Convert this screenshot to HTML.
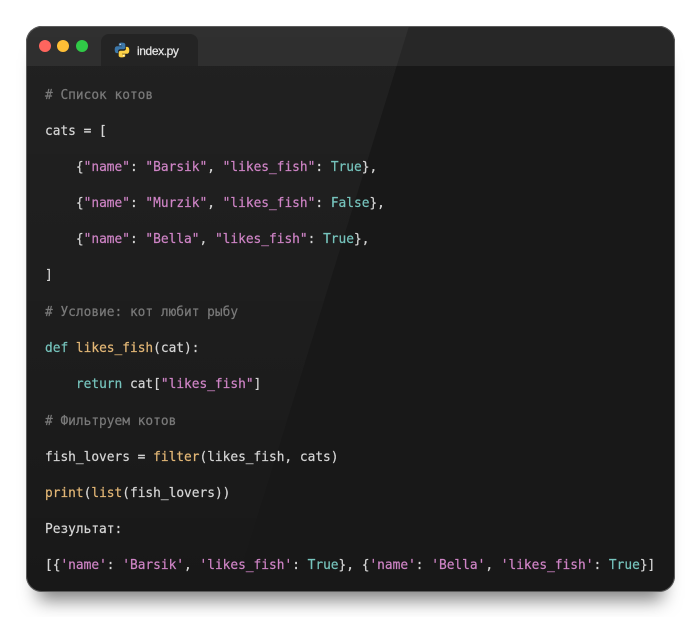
<!DOCTYPE html>
<html>
<head>
<meta charset="utf-8">
<style>
html,body{margin:0;padding:0;background:#fff;width:700px;height:617px;overflow:hidden}
.win{position:absolute;left:26px;top:26px;width:649px;height:566px;box-sizing:border-box;background:#181818;border-radius:16px;overflow:hidden;}
.shadow{position:absolute;left:26px;top:26px;width:649px;height:566px;border-radius:16px;box-shadow:0 20px 18px -12px rgba(0,0,0,.5)}
.bar{position:absolute;left:0;top:0;width:100%;height:40px;background:#272727}
.tab{position:absolute;left:75px;top:8px;width:97px;height:32px;background:#1b1b1b;border-radius:8px 8px 0 0}
.tabt{position:absolute;left:111px;top:18px;color:#e4e4e4;font:500 12px/14px "Liberation Sans",sans-serif;letter-spacing:-.4px;-webkit-text-stroke:.25px #e4e4e4}
.dot{position:absolute;top:14px;width:12px;height:12px;border-radius:50%}
.ov{position:absolute;left:0;top:0}
.edge{position:absolute;left:26px;top:26px;width:649px;height:566px;box-sizing:border-box;border:1.5px solid #5c5c5c;border-radius:16px;pointer-events:none}
.l{position:absolute;left:45px;white-space:pre;font-family:"DejaVu Sans Mono","Liberation Mono",monospace;font-size:12.83px;line-height:16px;color:#d6d6d6;-webkit-text-stroke:.2px currentColor}
.c{color:#7a7a7a}.s{color:#cf84c6}.k{color:#76c4bd}.f{color:#e3b776}
</style>
</head>
<body>
<div class="shadow"></div>
<div class="win">
<div class="bar"></div>
<div class="tab"></div>
<div class="dot" style="left:13px;background:#ff5f57"></div>
<div class="dot" style="left:31px;background:#febc2e"></div>
<div class="dot" style="left:50px;background:#28c840"></div>
<svg class="ov" width="649" height="566" viewBox="0 0 649 566">
<defs><linearGradient id="g" x1="0" y1="0" x2="0" y2="1"><stop offset="0" stop-color="#fff" stop-opacity=".04"/><stop offset=".6" stop-color="#fff" stop-opacity=".02"/><stop offset="1" stop-color="#fff" stop-opacity="0"/></linearGradient></defs>
<polygon points="0,0 383,0 208,566 0,566" fill="url(#g)"/>
</svg>
<svg style="position:absolute;left:88px;top:16px" width="16" height="16" viewBox="0 0 16 16">
<path d="M7.9 .6C4.6 .6 4.8 2 4.8 2v1.700h3.200v.5H3.100S.7 3.900 .7 7.600s2.100 3.500 2.100 3.500H4.100V9.400s-.1-2.100 2.100-2.100h3.100s2 0 2-1.900V2.500S11.600 .6 7.900 .6z" fill="#3c77a9"/>
<path d="M8.100 15.400c3.300 0 3.100-1.400 3.100-1.400v-1.700H8v-.5h4.900s2.400.3 2.400-3.400-2.100-3.500-2.100-3.500H11.900v1.700s.1 2.100-2.100 2.100H6.700s-2 0-2 1.900v2.900S4.400 15.400 8.100 15.400z" fill="#fdd247"/>
<circle cx="6.200" cy="2.400" r=".6" fill="#fff"/><circle cx="9.800" cy="13.600" r=".6" fill="#fff"/>
</svg>
<div class="tabt">index.py</div>
</div>
<div class="edge"></div>
<div class="l c" style="top:88px"># Список котов</div>
<div class="l" style="top:124px">cats = [</div>
<div class="l" style="top:160px">    {<span class="s">"name"</span>: <span class="s">"Barsik"</span>, <span class="s">"likes_fish"</span>: <span class="k">True</span>},</div>
<div class="l" style="top:196px">    {<span class="s">"name"</span>: <span class="s">"Murzik"</span>, <span class="s">"likes_fish"</span>: <span class="k">False</span>},</div>
<div class="l" style="top:232px">    {<span class="s">"name"</span>: <span class="s">"Bella"</span>, <span class="s">"likes_fish"</span>: <span class="k">True</span>},</div>
<div class="l" style="top:268px">]</div>
<div class="l c" style="top:305px"># Условие: кот любит рыбу</div>
<div class="l" style="top:341px"><span class="k">def</span> <span class="f">likes_fish</span>(cat):</div>
<div class="l" style="top:377px">    <span class="k">return</span> cat[<span class="s">"likes_fish"</span>]</div>
<div class="l c" style="top:414px"># Фильтруем котов</div>
<div class="l" style="top:450px">fish_lovers = <span class="f">filter</span>(likes_fish, cats)</div>
<div class="l" style="top:486px"><span class="f">print</span>(<span class="f">list</span>(fish_lovers))</div>
<div class="l" style="top:522px">Результат:</div>
<div class="l" style="top:558px">[{<span class="s">'name'</span>: <span class="s">'Barsik'</span>, <span class="s">'likes_fish'</span>: <span class="k">True</span>}, {<span class="s">'name'</span>: <span class="s">'Bella'</span>, <span class="s">'likes_fish'</span>: <span class="k">True</span>}]</div>
</body>
</html>
